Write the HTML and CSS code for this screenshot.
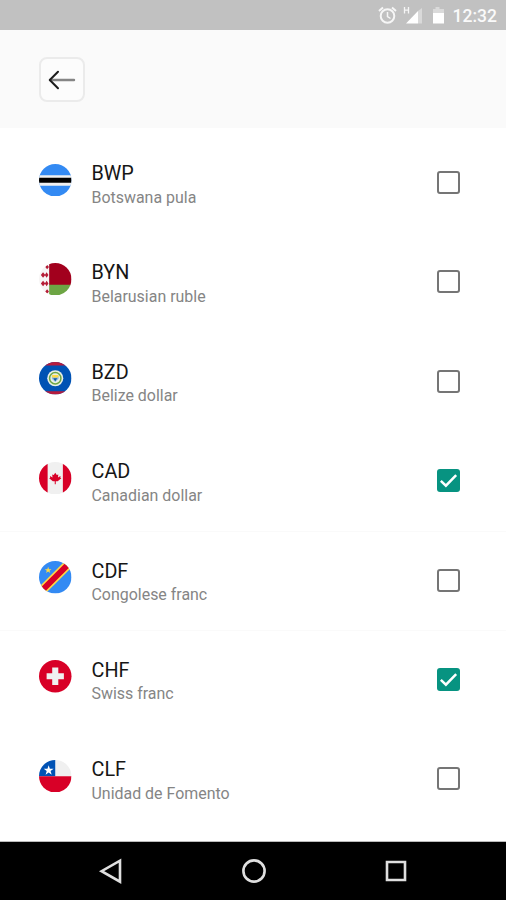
FILE: index.html
```html
<!DOCTYPE html>
<html lang="en">
<head>
<meta charset="utf-8">
<title>Currencies</title>
<link rel="stylesheet" href="styles.css">
</head>
<body>
<div class="screen">
  <div class="status">
    <svg class="status-icons" viewBox="0 0 72 30" width="72" height="30">
      <g fill="none" stroke="#f6f6f6" stroke-width="2">
        <circle cx="11.500" cy="16" r="6.800"/>
        <path d="M11.500 12v4.500l3 2" stroke-width="1.500"/>
        <path d="M3 11l4-3.500M20 11l-4-3.500"/>
      </g>
      <path d="M28.500 7v6.500M32.500 7v6.500M28.500 10.200h4" fill="none" stroke="#f6f6f6" stroke-width="1.300"/>
      <path d="M30 23.500L42 11v12.500z" fill="#fff"/>
      <path d="M42 11l4-3v15.500h-4z" fill="#d9d9d9"/>
      <path d="M57 9h2.500V7h4v2H68v5H57z" fill="#dadada"/>
      <path d="M57 13h11v10.500H57z" fill="#fff"/>
    </svg>
    <span class="clock">12:32</span>
  </div>
  <header class="header">
    <button class="back" aria-label="Back">
      <svg viewBox="0 0 30 24" width="30" height="24" fill="none" stroke-linecap="round" stroke-linejoin="round">
        <path d="M3 12h24" stroke="#858585" stroke-width="2.400"/>
        <path d="M11 3.700L2.800 12l8.200 8.300" stroke="#1c1c1c" stroke-width="2"/>
      </svg>
    </button>
  </header>
  <main class="list">
    <label class="row">
      <svg class="flag" viewBox="0 0 32 32"><g clip-path="url(#disc)"><path fill="#338af3" d="M0 0h32v32H0z"/><path fill="#f0f0f0" d="M0 11h32v10.500H0z"/><path d="M0 13.500h32v5H0z"/></g></svg>
      <span class="names"><span class="code">BWP</span><span class="name">Botswana pula</span></span>
      <span class="box"></span>
    </label>
    <label class="row">
      <svg class="flag" viewBox="0 0 32 32"><g clip-path="url(#disc)"><path fill="#f7f5f5" d="M0 0h10v32H0z"/><path fill="#a2001d" d="M10 0h22v22H10z"/><path fill="#6da544" d="M10 21.500h22V32H10z"/><path fill="#b51d37" d="M8 1.800l1.800 2.200L8 6.200 6.200 4zM4 9l2.200 2.700L4 14.400l-2.200-2.700zM7.500 9l1.800 2.700-1.800 2.700-1.800-2.700zM4 17.500l2.200 2.700L4 22.900l-2.200-2.700zM7.500 17.500l1.800 2.700-1.800 2.700-1.800-2.700zM8 25.800l1.800 2.200L8 30.200 6.200 28z"/></g></svg>
      <span class="names"><span class="code">BYN</span><span class="name">Belarusian ruble</span></span>
      <span class="box"></span>
    </label>
    <label class="row">
      <svg class="flag" viewBox="0 0 32 32"><g clip-path="url(#disc)"><path fill="#0052b4" d="M0 0h32v32H0z"/><path fill="#b51b3d" d="M0 0h32v3.500H0zM0 28.800h32V32H0z"/></g><circle cx="16" cy="16" r="7.900" fill="#e9efe5"/><circle cx="16" cy="16" r="5.600" fill="#e9efe5" stroke="#6da544" stroke-width="1.500"/><path d="M12.700 13.500h6.600v3L16 19.800l-3.300-3.300z" fill="#8dbce8"/><path d="M12.900 12.800h6.200v2.500h-6.200z" fill="#ffda44"/><path d="M14 16h4l-2 3z" fill="#175a9d"/></svg>
      <span class="names"><span class="code">BZD</span><span class="name">Belize dollar</span></span>
      <span class="box"></span>
    </label>
    <label class="row">
      <svg class="flag" viewBox="0 0 32 32"><g clip-path="url(#disc)"><path fill="#f0f0f0" d="M0 0h32v32H0z"/><path fill="#d80027" d="M0 0h8.500v32H0zM23.500 0H32v32h-8.500z"/></g><path fill="#d80027" d="M16 10.500l1.500 2.400 1.500-.6-.3 3 2.500-1.400-.2 1.500 1 .5-3.600 3h-1.900V22h-1v-3.100h-1.900l-3.600-3 1-.5-.2-1.500 2.500 1.400-.3-3 1.500.6z"/></svg>
      <span class="names"><span class="code">CAD</span><span class="name">Canadian dollar</span></span>
      <span class="box checked"><svg viewBox="0 0 24 24"><path d="M4 12.300l5.300 5.100L20 6.500"/></svg></span>
    </label>
    <label class="row">
      <svg class="flag" viewBox="0 0 32 32"><g clip-path="url(#disc)"><path fill="#338af3" d="M0 0h32v32H0z"/><path stroke="#ffda44" stroke-width="9" d="M-1 33L33-1"/><path stroke="#d80027" stroke-width="5.800" d="M-1 33L33-1"/></g><path fill="#ffda44" d="M9 5.600l.8 2.400h2.500l-2 1.500.8 2.400L9 10.400l-2.100 1.500.8-2.400-2-1.500h2.500z"/></svg>
      <span class="names"><span class="code">CDF</span><span class="name">Congolese franc</span></span>
      <span class="box"></span>
    </label>
    <label class="row">
      <svg class="flag" viewBox="0 0 32 32"><circle cx="16" cy="16" r="16" fill="#d80027"/><path fill="#f0f0f0" d="M13 7.500h6V13h5.500v6H19v5.500h-6V19H7.500v-6H13z"/></svg>
      <span class="names"><span class="code">CHF</span><span class="name">Swiss franc</span></span>
      <span class="box checked"><svg viewBox="0 0 24 24"><path d="M4 12.300l5.300 5.100L20 6.500"/></svg></span>
    </label>
    <label class="row">
      <svg class="flag" viewBox="0 0 32 32"><g clip-path="url(#disc)"><path fill="#f0f0f0" d="M16 0h16v16H16z"/><path fill="#0052b4" d="M0 0h16v16H0z"/><path fill="#d80027" d="M0 16h32v16H0z"/></g><path fill="#fff" d="M9.500 5.200l1.200 3.500h3.700l-3 2.200 1.100 3.500-3-2.100-3 2.100 1.100-3.500-3-2.200h3.700z"/></svg>
      <span class="names"><span class="code">CLF</span><span class="name">Unidad de Fomento</span></span>
      <span class="box"></span>
    </label>
  </main>
  <nav class="nav">
    <svg viewBox="0 0 28 28"><path d="M23 3.700v21L4.600 14.200z"/></svg>
    <svg viewBox="0 0 28 28"><circle cx="14" cy="14" r="10.600"/></svg>
    <svg viewBox="0 0 28 28"><path d="M5 5h18v18H5z"/></svg>
  </nav>
</div>
<svg width="0" height="0" class="defs"><defs><clipPath id="disc"><circle cx="16" cy="16" r="16"/></clipPath></defs></svg>
</body>
</html>
```
FILE: styles.css
```css
* { box-sizing: border-box; }
body { margin: 0; background: #fff; font-family: Roboto, sans-serif; overflow: hidden; }
.screen { width: 506px; height: 900px; display: flex; flex-direction: column; }
.status { height: 30px; flex: none; background: #c1c1c1; display: flex; align-items: center; justify-content: flex-end; padding-right: 9px; }
.status-icons { margin-right: 5px; }
.clock { color: #fafafa; font-size: 17.5px; font-weight: 500; line-height: 30px; padding-top: 2px; }
.header { height: 98px; flex: none; background: #fafafa; padding: 27px 0 0 39px; }
.back { display: flex; align-items: center; justify-content: center; width: 46px; height: 45px; padding: 0; background: #fcfcfc; border: 2px solid #ebebeb; border-radius: 8px; }
.list { flex: 1; padding-top: 5px; overflow: hidden; }
.row { display: flex; height: 99.4px; padding: 0 46.5px 0 39.5px; }
.row:nth-child(n+5):nth-child(-n+6) { box-shadow: inset 0 1px #fafafa; }
.flag { width: 32.5px; height: 32.5px; margin: 30.5px 0 0 -0.5px; flex: none; }
.names { display: flex; flex-direction: column; flex: 1; padding: 27px 0 0 20px; }
.code { color: #161616; font-size: 19.8px; line-height: 27.500px; }
.name { color: #858585; font-size: 15.95px; line-height: 20px; }
.box { flex: none; width: 23px; height: 23px; margin-top: 38px; border: 2px solid #757575; border-radius: 3px; }
.checked { background: #079381; border: 0; }
.checked svg { display: block; width: 23px; height: 23px; fill: none; stroke: #fff; stroke-width: 2.600; }
.nav { height: 58px; flex: none; background: #000; display: flex; align-items: center; gap: 114.500px; padding-left: 97px; box-shadow: 0 -1px #bbb; position: relative; }
.nav svg { width: 28px; height: 28px; fill: none; stroke: #dfdfdf; stroke-width: 2.600; }
.defs { display: block; }
```
